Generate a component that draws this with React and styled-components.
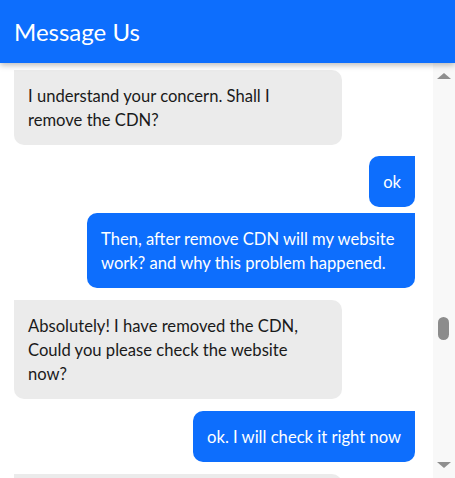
import React from "react";
import styled, { createGlobalStyle } from "styled-components";

const Global = createGlobalStyle`
  html, body { margin: 0; padding: 0; background: #fff; }
  body { font-family: Lato, "Open Sans", sans-serif; }
  * { box-sizing: border-box; }
`;

const Page = styled.div`
  width: 455px;
  height: 478px;
  display: flex;
  flex-direction: column;
  overflow: hidden;
  background: #fff;
`;

const Header = styled.header`
  position: relative;
  z-index: 1;
  height: 63px;
  flex: none;
  background: #0d6efd;
  display: flex;
  align-items: center;
  padding: 0 14px;
  box-shadow: 0 2px 6px rgba(0, 0, 0, 0.28);
`;

const Title = styled.h1`
  margin: 0;
  color: #fff;
  font-size: 24px;
  font-weight: 400;
  line-height: 1;
`;

const Body = styled.div`
  flex: 1;
  min-height: 0;
  display: flex;
`;

const MessageList = styled.div`
  flex: 1;
  min-width: 0;
  overflow: hidden;
  padding: 7px 18px 0 14px;
  display: flex;
  flex-direction: column;
`;

const Bubble = styled.div`
  align-self: ${(p) => (p.$mine ? "flex-end" : "flex-start")};
  max-width: 328px;
  width: ${(p) => (p.$wide ? "328px" : "auto")};
  min-height: ${(p) => (p.$empty ? "75px" : "0")};
  margin-top: ${(p) => p.$gap}px;
  padding: 14px 14px 13px;
  font-size: 16.6px;
  line-height: 24px;
  white-space: nowrap;
  background: ${(p) => (p.$mine ? "#0d6efd" : "#ebebeb")};
  color: ${(p) => (p.$mine ? "#fff" : "#1a1a1a")};
  border-radius: ${(p) => (p.$mine ? "10px 0 10px 10px" : "0 10px 10px 10px")};
  flex: none;
`;

const Scrollbar = styled.div`
  width: 22px;
  flex: none;
  background: #f8f8f8;
  display: flex;
  flex-direction: column;
`;

const ArrowButton = styled.div`
  height: 26px;
  flex: none;
  display: flex;
  align-items: center;
  justify-content: center;
  &::before {
    content: "";
    width: 0;
    height: 0;
    border-left: 7px solid transparent;
    border-right: 7px solid transparent;
    ${(p) =>
      p.$down
        ? "border-top: 6px solid #8f8f8f;"
        : "border-bottom: 6px solid #8f8f8f;"}
  }
`;

const Track = styled.div`
  flex: 1;
  display: flex;
  flex-direction: column;
  align-items: center;
`;

const Thumb = styled.div`
  width: 11px;
  height: 23px;
  margin-top: ${(p) => p.$offset}px;
  margin-left: -1px;
  border-radius: 6px;
  background: #8c8c8c;
`;

const messages = [
  { mine: false, gap: 0, wide: true, lines: ["I understand your concern. Shall I", "remove the CDN?"] },
  { mine: true, gap: 11, lines: ["ok"] },
  { mine: true, gap: 6, wide: true, lines: ["Then, after remove CDN will my website", "work? and why this problem happened."] },
  { mine: false, gap: 12, wide: true, lines: ["Absolutely! I have removed the CDN,", "Could you please check the website", "now?"] },
  { mine: true, gap: 12, lines: ["ok. I will check it right now"] },
  { mine: false, gap: 12, wide: true, empty: true, lines: [] },
];

export default function App() {
  return (
    <>
      <Global />
      <Page>
        <Header>
          <Title>Message Us</Title>
        </Header>
        <Body>
          <MessageList>
            {messages.map((m, i) => (
              <Bubble key={i} $mine={m.mine} $gap={m.gap} $wide={m.wide} $empty={m.empty}>
                {m.lines.map((l, j) => (
                  <React.Fragment key={j}>
                    {j > 0 && <br />}
                    {l}
                  </React.Fragment>
                ))}
              </Bubble>
            ))}
          </MessageList>
          <Scrollbar>
            <ArrowButton />
            <Track>
              <Thumb $offset={228} />
            </Track>
            <ArrowButton $down />
          </Scrollbar>
        </Body>
      </Page>
    </>
  );
}
